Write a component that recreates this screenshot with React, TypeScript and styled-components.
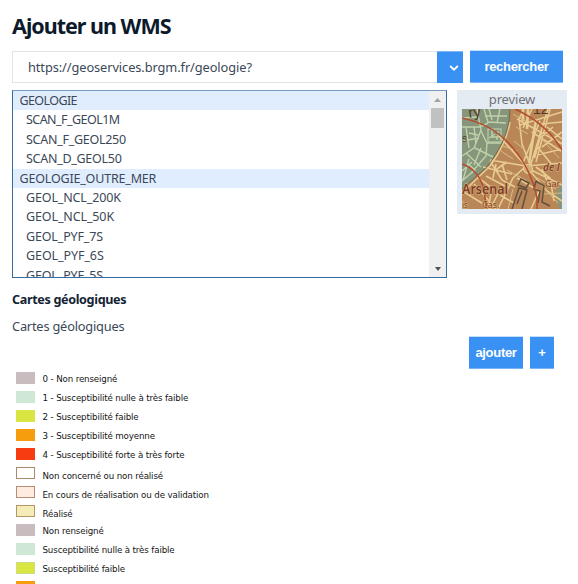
import React from "react";
import styled, { createGlobalStyle } from "styled-components";

const GlobalStyle = createGlobalStyle`
  * { box-sizing: border-box; }
  html, body { margin: 0; background: #fff; overflow: hidden; }
`;

const Page = styled.main`
  width: 578px;
  height: 584px;
  overflow: hidden;
  padding: 8px 11px 0 12px;
  display: flex;
  flex-direction: column;
  font-family: "Noto Sans", sans-serif;
  color: #3b4857;

  & > * { flex-shrink: 0; }
`;

const Title = styled.h1`
  margin: 0;
  height: 42px;
  line-height: 35px;
  font-size: 21.5px;
  font-weight: 700;
  letter-spacing: -1px;
  color: #0c1b2b;
  white-space: nowrap;
`;

const SearchRow = styled.div`
  display: flex;
  align-items: flex-end;
  height: 33px;
`;

const UrlBox = styled.div`
  width: 425px;
  height: 32px;
  border: 1px solid #e0e3ea;
  border-right: 0;
  padding-left: 15px;
  line-height: 30px;
  font-size: 12.8px;
  letter-spacing: -0.08px;
  white-space: nowrap;
`;

const DropButton = styled.button`
  width: 26px;
  height: 32px;
  border: 0;
  padding: 0 0 0 8px;
  background: #3992f3;
  border-top: 1px solid #7db7f6;
  display: flex;
  align-items: center;
  justify-content: center;
`;

const BlueButton = styled.button<{ $width: number }>`
  width: ${(p) => p.$width}px;
  height: 33px;
  margin-left: 7px;
  padding: 0;
  border: 0;
  border-top: 1px solid #c4dffc;
  border-bottom: 1px solid #78b4f6;
  background: #3992f3;
  color: #fff;
  font: bold 13px/31px "Liberation Sans", sans-serif;
  letter-spacing: -0.3px;
`;

const Picker = styled.div`
  display: flex;
  align-items: flex-start;
  gap: 10px;
  margin-top: 7px;
  height: 188px;
  margin-right: -5px;
`;

const ListBox = styled.div`
  width: 435px;
  height: 188px;
  border: 1px solid #356ba0;
  border-top-color: #7898be;
  display: flex;
  overflow: hidden;
`;

const Options = styled.div`
  flex: 1;
  overflow: hidden;
`;

const Option = styled.div<{ $group?: boolean; $track: number }>`
  height: 19.4px;
  line-height: 19px;
  padding-left: ${(p) => (p.$group ? 6.5 : 13)}px;
  background: ${(p) => (p.$group ? "#e0edfe" : "#fff")};
  font-size: 12.5px;
  letter-spacing: ${(p) => p.$track}px;
  white-space: nowrap;
`;

const ScrollTrack = styled.div`
  width: 17px;
  background: #f0f0f0;
  display: flex;
  flex-direction: column;
  align-items: center;
`;

const ArrowCell = styled.div`
  height: 17px;
  display: flex;
  align-items: center;
`;

const Thumb = styled.div`
  width: 13px;
  height: 20px;
  background: #c1c1c1;
  margin-bottom: auto;
`;

const Preview = styled.div`
  width: 110px;
  height: 124px;
  background: #e4ebf3;
  display: flex;
  flex-direction: column;
  align-items: center;
`;

const PreviewLabel = styled.span`
  height: 19px;
  line-height: 19px;
  font-size: 13px;
  letter-spacing: -0.15px;
  color: #707275;
`;

const LayerName = styled.p<{ $bold?: boolean }>`
  margin: 0;
  height: 26px;
  line-height: 26px;
  font-size: ${(p) => (p.$bold ? 12.6 : 12.8)}px;
  font-weight: ${(p) => (p.$bold ? 700 : 400)};
  letter-spacing: ${(p) => (p.$bold ? -0.35 : -0.2)}px;
  color: ${(p) => (p.$bold ? "#142434" : "#3b4857")};
  white-space: nowrap;
`;

const Details = styled.section`
  padding-top: 9px;
  height: 58px;
`;

const Actions = styled.div`
  display: flex;
  justify-content: flex-end;
  padding-right: 13px;
  height: 33px;
`;

const Legend = styled.ul`
  list-style: none;
  margin: 3px 0 0;
  padding: 0 0 0 4px;
`;

const LegendRow = styled.li`
  height: 19px;
  display: flex;
  align-items: flex-start;
  gap: 7.5px;
`;

const Swatch = styled.span<{ $fill: string; $line?: string }>`
  width: 19px;
  height: 12px;
  background: ${(p) => p.$fill};
  border: 1px solid ${(p) => p.$line ?? p.$fill};
`;

const LegendText = styled.span<{ $drop: number }>`
  padding-top: ${(p) => p.$drop}px;
  font: 8.7px/13px "DejaVu Sans", sans-serif;
  letter-spacing: -0.14px;
  color: #151515;
  white-space: nowrap;
`;

type Layer = { name: string; group?: boolean; track: number };

const layers: Layer[] = [
  { name: "GEOLOGIE", group: true, track: -0.6 },
  { name: "SCAN_F_GEOL1M", track: -0.55 },
  { name: "SCAN_F_GEOL250", track: -0.27 },
  { name: "SCAN_D_GEOL50", track: -0.28 },
  { name: "GEOLOGIE_OUTRE_MER", group: true, track: -0.18 },
  { name: "GEOL_NCL_200K", track: -0.14 },
  { name: "GEOL_NCL_50K", track: -0.12 },
  { name: "GEOL_PYF_7S", track: -0.15 },
  { name: "GEOL_PYF_6S", track: -0.08 },
  { name: "GEOL_PYF_5S", track: -0.15 },
];

const legend = [
  { text: "0 - Non renseigné", fill: "#c8bcbf", drop: 1 },
  { text: "1 - Susceptibilité nulle à très faible", fill: "#cfe7d5", drop: 1 },
  { text: "2 - Susceptibilité faible", fill: "#d9e541", drop: 1 },
  { text: "3 - Susceptibilité moyenne", fill: "#f59d0d", drop: 1 },
  { text: "4 - Susceptibilité forte à très forte", fill: "#f73c12", drop: 1 },
  { text: "Non concerné ou non réalisé", fill: "#ffffff", line: "#a98a6c", drop: 3 },
  { text: "En cours de réalisation ou de validation", fill: "#ffebe0", line: "#b78e72", drop: 3 },
  { text: "Réalisé", fill: "#f5edb8", line: "#b59765", drop: 3 },
  { text: "Non renseigné", fill: "#c8bcbf", drop: 1 },
  { text: "Susceptibilité nulle à très faible", fill: "#cfe7d5", drop: 1 },
  { text: "Susceptibilité faible", fill: "#d9e541", line: "#cbdd81", drop: 1 },
  { text: "", fill: "#f59d0d", drop: 1 },
];

const MapTile = () => (
  <svg width="100" height="100" viewBox="0 0 100 100">
    <rect width="100" height="100" fill="#b98658" />
    <path d="M0 0H48L47 13Q43 35 25 58L8 73L0 80Z" fill="#87967b" />
    <path d="M100 73L94 84L97 100H100Z" fill="#87967b" />
    <g fill="none" stroke="#bed2aa" strokeWidth="1.4">
      <path d="M22 0L26 13L44 14M27 0L30 11M38 0L35 14M23 7L45 7M0 18L18 18L26 14M15 0L19 21L12 39L0 47M0 9L15 8M4 18L7 39M12 18L14 35M0 32L17 29M7 24L16 26M19 22L25 34L39 34M25 34L24 47L9 64M13 39L31 48M4 44L19 58M19 39L12 56M0 62L10 53M7 50L1 71M0 72L13 61L5 54" />
      <rect x="26" y="20" width="13" height="13" strokeWidth="1.1" />
      <path d="M30 21V28H36V22M27 29L33 25M35 31V28" />
    </g>
    <g fill="none" stroke="#e7cb90" strokeWidth="1.6">
      <path d="M48 13Q44 35 28 57L0 84M28 51L64 57L100 54M37 27L64 57M62 0L57 10L60 35L69 58M70 0L61 19M86 0L68 58M88 0L74 53M78 12L61 54M55 10L100 35M58 16L100 3M85 18L100 30M79 15L100 13M70 23L99 42M76 31L91 18M74 36L91 57M80 38L100 23M75 46L100 40M64 57L51 69L36 100M64 57L85 82L100 92M67 60L100 76M55 69L77 82L69 100M28 52L40 71L53 78M21 58L50 65M34 55L31 69M40 55L45 71M32 62L45 53M24 67L43 77M15 68L30 79L26 100M12 75L34 100M2 83L23 96M39 79L28 100M38 86L52 94M74 58L88 69L92 92M80 60L86 74" />
      <path d="M61 0V12M66 0L65 20M74 11L67 54M79 24L72 49" strokeWidth="2.6" />
    </g>
    <g fill="none" stroke="#dabc83" strokeWidth="1">
      <path d="M51 5L63 12M54 18L66 25M52 32L63 41M81 22L100 34M78 28L97 49M41 37L55 42M39 42L51 50M45 61L65 72M72 67L94 80M77 74L96 94M51 80L46 100M81 85L100 84" />
    </g>
    <circle cx="66" cy="60" r="4.5" fill="#d1ae73" stroke="#ead098" />
    <path d="M50 100L57 79L65 81L60 100M55 95L60 82M59 70L67 74L64 79L56 76ZM74 72L82 77L80 93L88 97M74 72L72 80L78 82L76 94" fill="none" stroke="#62503c" strokeWidth="1.5" />
    <path d="M48 0L47 13Q43 35 25 58L8 73L0 80" fill="none" stroke="#665b43" strokeWidth=".8" />
    <g fill="none" stroke="#b44c2e" strokeWidth="1.5">
      <path d="M0 9Q24 14 39 27Q67 51 75 89V100" />
      <path d="M53 0Q84 14 100 41" />
      <path d="M0 55Q15 60 21 77L25 100" />
    </g>
    <g fill="#573b29" fontFamily="Liberation Sans, sans-serif">
      <text x="7" y="9" fontSize="15" transform="rotate(-8 7 9)">ry</text>
      <text x="71" y="5" fontSize="14">12</text>
      <text x="0" y="33" fontSize="10">s</text>
    </g>
    <g fill="#7f3d28" stroke="#deb87f" strokeWidth="1" paintOrder="stroke" fontFamily="Noto Sans, sans-serif">
      <text x="0" y="85" fontSize="14" fontWeight="600" textLength="46" lengthAdjust="spacingAndGlyphs">Arsenal</text>
      <text x="81" y="62" fontSize="10" fontStyle="italic" fontWeight="600">de l</text>
      <text x="83" y="78" fontSize="9">Gar</text>
      <text x="20" y="99" fontSize="9">Cas.</text>
      <text x="0" y="99" fontSize="8">is</text>
    </g>
  </svg>
);

export default function App() {
  return (
    <>
      <GlobalStyle />
      <Page>
        <Title>Ajouter un WMS</Title>
        <SearchRow>
          <UrlBox>https://geoservices.brgm.fr/geologie?</UrlBox>
          <DropButton aria-label="Services">
            <svg width="10" height="6" viewBox="0 0 10 6">
              <path d="M1.2 1L5 4.7L8.8 1" fill="none" stroke="#fff" strokeWidth="1.8" />
            </svg>
          </DropButton>
          <BlueButton $width={93}>rechercher</BlueButton>
        </SearchRow>
        <Picker>
          <ListBox>
            <Options>
              {layers.map((l) => (
                <Option key={l.name} $group={l.group} $track={l.track}>{l.name}</Option>
              ))}
            </Options>
            <ScrollTrack>
              <ArrowCell>
                <svg width="7" height="4"><path d="M0 4L3.5 0L7 4Z" fill="#a3a3a3" /></svg>
              </ArrowCell>
              <Thumb />
              <ArrowCell>
                <svg width="6" height="4"><path d="M0 0H6L3 4Z" fill="#505050" /></svg>
              </ArrowCell>
            </ScrollTrack>
          </ListBox>
          <Preview>
            <PreviewLabel>preview</PreviewLabel>
            <MapTile />
          </Preview>
        </Picker>
        <Details>
          <LayerName $bold>Cartes géologiques</LayerName>
          <LayerName>Cartes géologiques</LayerName>
        </Details>
        <Actions>
          <BlueButton $width={54}>ajouter</BlueButton>
          <BlueButton $width={24}>+</BlueButton>
        </Actions>
        <Legend>
          {legend.map((item) => (
            <LegendRow key={item.text}>
              <Swatch $fill={item.fill} $line={item.line} />
              <LegendText $drop={item.drop}>{item.text}</LegendText>
            </LegendRow>
          ))}
        </Legend>
      </Page>
    </>
  );
}
